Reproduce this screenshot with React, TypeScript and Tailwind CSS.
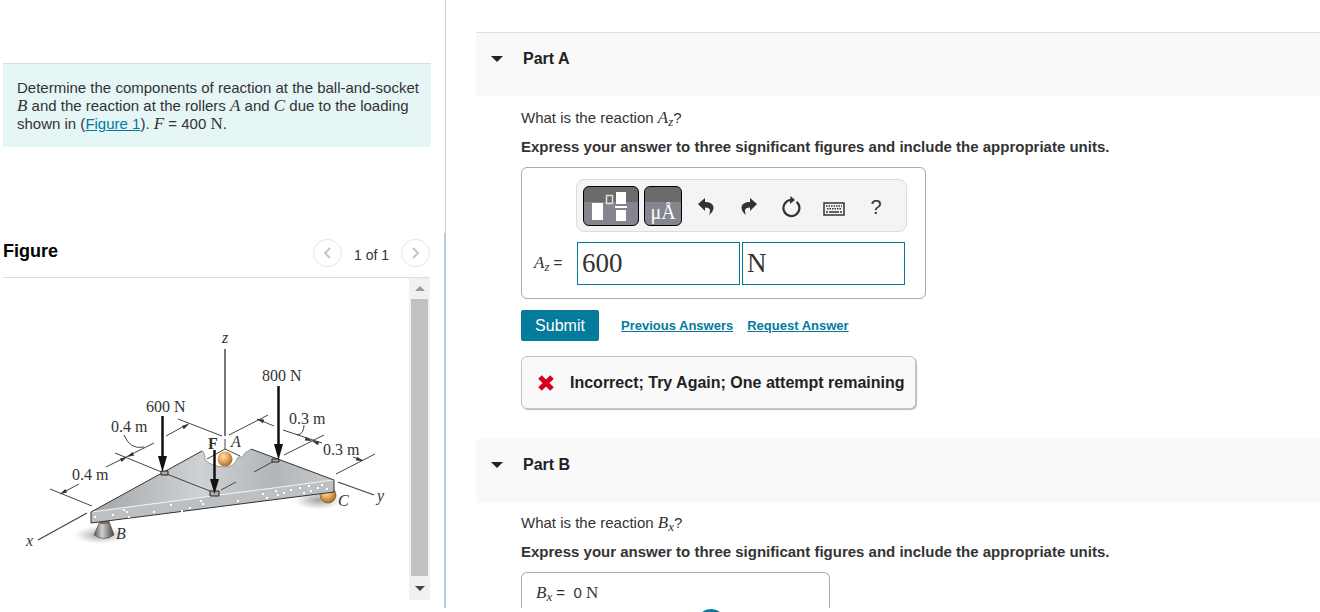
import type { ReactNode } from 'react';

const serif = 'font-["Liberation_Serif",serif]';

function Var({ children, sub }: { children: ReactNode; sub?: string }) {
  return (
    <span className='font-["Liberation_Serif",serif] text-[17px] leading-[0] italic'>
      {children}
      {sub && <sub className="bottom-[-3px] text-[13px]">{sub}</sub>}
    </span>
  );
}

function Caret() {
  return (
    <svg viewBox="0 0 12 6" className="h-1.5 w-3" fill="#222">
      <path d="M0 0h12L6 6z" />
    </svg>
  );
}

// light flecks on the front edge of the plate
const specks = [
  [94, 516], [112, 514], [126, 511], [128, 516], [123, 509], [153, 511], [170, 504], [181, 510], [189, 507],
  [200, 500], [202, 503], [237, 500], [262, 493], [266, 497], [275, 490], [277, 494], [283, 492], [290, 489],
  [299, 487], [303, 492], [308, 485], [310, 490], [317, 487], [321, 484], [326, 488],
];

function Head({ x, y, angle }: { x: number; y: number; angle: number }) {
  return <path d="M0 0L-7 -2L-7 2z" fill="#333" stroke="none" transform={`translate(${x} ${y}) rotate(${angle})`} />;
}

function Diagram() {
  return (
    <svg
      viewBox="3 278 406 322"
      className='block w-full font-["Liberation_Serif",serif]'
      role="img"
      aria-label="Triangular plate supported at A, B and C"
    >
      <defs>
        <linearGradient id="plate" x1="0" y1="0" x2="1" y2="0">
          <stop offset="0" stopColor="#a2a6a9" />
          <stop offset=".45" stopColor="#cfd2d4" />
          <stop offset=".75" stopColor="#b3b6b9" />
          <stop offset="1" stopColor="#c6c8ca" />
        </linearGradient>
        <linearGradient id="cone">
          <stop offset="0" stopColor="#555" />
          <stop offset=".4" stopColor="#d0d0d0" />
          <stop offset="1" stopColor="#444" />
        </linearGradient>
        <radialGradient id="ball" cx=".4" cy=".35" r=".7">
          <stop offset="0" stopColor="#ffe3b0" />
          <stop offset=".5" stopColor="#e0a45a" />
          <stop offset="1" stopColor="#9b6526" />
        </radialGradient>
        <radialGradient id="shade">
          <stop offset="0" stopColor="#777" stopOpacity=".7" />
          <stop offset="1" stopColor="#999" stopOpacity="0" />
        </radialGradient>
      </defs>

      <ellipse cx="100" cy="535" rx="26" ry="9" fill="url(#shade)" />
      <ellipse cx="318" cy="500" rx="24" ry="10" fill="url(#shade)" />
      <path d="M100 521h9l5 14q-10 7-20 0z" fill="url(#cone)" stroke="#444" strokeWidth=".6" />
      <path d="M100 521h9v3h-9z" fill="#8a6b48" />
      <circle cx="328" cy="495" r="8" fill="url(#ball)" stroke="#6b4a1f" strokeWidth=".6" />

      <path
        d="M91 512L202 451Q205 452 205 460Q213 467 225 467Q235 467 238 457Q243 458 245 453L251 449L334 480L334 492L91 523z"
        fill="url(#plate)"
      />
      <path d="M91 512L334 480V492L91 523z" fill="#bcc0c3" />
      <path d="M91 512L334 480" stroke="#f4f4f4" />
      <path d="M202 451L91 512V523L334 492V480L251 449" fill="none" stroke="#333" />
      <path
        d="M202 451Q205 452 205 460Q213 467 225 467Q235 467 238 457Q243 458 245 453L251 449"
        fill="none"
        stroke="#888"
        strokeWidth=".8"
      />
      {specks.map(([x, y]) => (
        <rect key={`${x}-${y}`} x={x} y={y} width="2" height="2" fill="#fff" />
      ))}

      <g stroke="#444" strokeWidth="1" fill="none">
        <path d="M225 439V449L207 459M225 449L240 456" />
        <path d="M225 349V436" stroke="#777" strokeWidth="2" />
        <path d="M87 513L38 540M338 482L374 495" strokeWidth="1.300" />
        <path d="M178 419L222 436M166 436L188 424M115 453L164 473L210 491M50 489L92 506" />
        <path d="M154 443L106 467M79 484L60 494M124 435Q130 450 144 447" />
        <path d="M229 435L268 415M257 419L274 426M283 430L322 443M304 425Q304 434 297 435" />
        <path d="M284 455L324 435M254 472L276 460M353 457L362 460M336 474L375 454M221 490L236 482" />
      </g>
      <circle cx="225" cy="459" r="7.500" fill="url(#ball)" />
      <Head x={189} y={424} angle={-29} />
      <Head x={127} y={457} angle={-27} />
      <Head x={127} y={457} angle={153} />
      <Head x={60} y={494} angle={153} />
      <Head x={257} y={419} angle={200} />
      <Head x={312} y={441} angle={20} />
      <Head x={312} y={441} angle={200} />
      <Head x={363} y={461} angle={20} />

      <g fill="#aaa" stroke="#222">
        <path d="M161 471h7v4h-7zM210 491h9v5h-9zM272 459h7v3h-7z" />
      </g>
      <g stroke="#111" strokeWidth="2.500" fill="#111">
        <path d="M162.500 416V458M278.500 386V446M214.500 450V480" />
        <path d="M158 456h9l-4.500 16zM274 444h9l-4.500 16zM210 479h9l-4.500 15z" stroke="none" />
      </g>

      <g fill="#333" fontSize="16">
        <text x="146" y="412">600 N</text>
        <text x="262" y="381">800 N</text>
        <text x="111" y="432">0.4 m</text>
        <text x="72" y="480">0.4 m</text>
        <text x="289" y="424">0.3 m</text>
        <text x="323" y="455">0.3 m</text>
        <text x="208" y="449" fontWeight="bold">F</text>
        <g fontStyle="italic">
          <text x="222" y="343">z</text>
          <text x="26" y="546">x</text>
          <text x="377" y="501">y</text>
          <text x="231" y="447">A</text>
          <text x="116" y="539">B</text>
          <text x="338" y="506">C</text>
        </g>
      </g>
    </svg>
  );
}

const padBtn =
  'flex h-10 items-center justify-center rounded-md border border-black bg-linear-to-b from-[#6b6b6b] from-40% to-[#85858f] to-40%';
const toolBtn = 'flex h-8 w-6 items-center justify-center text-[#333]';

function Toolbar() {
  return (
    <div className="flex h-[53px] items-center rounded-lg border border-[#ddd] bg-[#f4f4f4] px-1.5">
      <button type="button" aria-label="Templates" className={`${padBtn} w-14`}>
        <svg viewBox="0 0 56 40" className="h-10 w-14 shrink-0" fill="#fff">
          <path d="M9 17h11v17H9zM33 6h10v12H33zM33 24h10v11H33zM32 20h12v2H32z" />
          <path d="M23.500 9.500h6v8h-6z" fill="none" stroke="#ddd" strokeWidth="1.500" />
        </svg>
      </button>
      <button type="button" className={`${padBtn} ${serif} ml-[5px] w-[38px] pt-3 text-[20px] text-white`}>
        μÅ
      </button>
      <div className="ml-3 flex flex-1 items-center justify-between pt-0.5 pr-3">
        <button type="button" aria-label="Undo" className={toolBtn}>
          <svg viewBox="0 0 16 18" className="h-[18px] w-4" fill="currentColor">
            <path d="M7 0L0 6L7 13V9.500Q12 9.500 12 12.500Q12 15 11 17Q15.500 13.500 15.500 9.500Q15 4 7 4z" />
          </svg>
        </button>
        <button type="button" aria-label="Redo" className={toolBtn}>
          <svg viewBox="0 0 16 18" className="h-[18px] w-4" fill="currentColor">
            <path d="M9 0L16 6L9 13V9.500Q4 9.500 4 12.500Q4 15 5 17Q.5 13.500 .5 9.500Q1 4 9 4z" />
          </svg>
        </button>
        <button type="button" aria-label="Reset" className={toolBtn}>
          <svg viewBox="0 0 20 22" className="h-[22px] w-5" fill="none" stroke="currentColor" strokeWidth="2.200">
            <path d="M15.500 5.800A8 8 0 1 1 10 4" />
            <path d="M9.500 0L14 4L9 8z" fill="currentColor" stroke="none" />
          </svg>
        </button>
        <button type="button" aria-label="Keyboard" className={toolBtn}>
          <svg viewBox="0 0 22 14" className="mt-1 h-3.5 w-[22px]" fill="none" stroke="currentColor">
            <path d="M1 1h20v12H1z" strokeWidth="1.500" />
            <path d="M3 4h16M4 6.800h14" strokeWidth="1.500" strokeDasharray="1.500 1" />
            <path d="M3 10h2M6 10h10M17 10h2" strokeWidth="1.500" />
          </svg>
        </button>
        <button type="button" aria-label="Help" className={`${toolBtn} text-xl`}>
          ?
        </button>
      </div>
    </div>
  );
}

function PartHeader({ title, className = '' }: { title: string; className?: string }) {
  return (
    <div className={`flex h-16 items-start bg-[#f9f9f9] pt-3.5 pl-[15px] ${className}`}>
      <button type="button" className="flex items-center gap-5 text-base leading-6 font-bold text-[#222]">
        <Caret />
        {title}
      </button>
    </div>
  );
}

const answerInput =
  'h-[43px] w-[163px] border border-[#047a9c] bg-white px-1 font-["Liberation_Serif",serif] text-[27px] text-[#333] outline-none';
const link = 'text-[13px] font-bold text-[#047a9c] underline';
const pagerBtn = 'flex h-7 w-[29px] items-center justify-center rounded-full border border-[#e5e5e5]';

export default function App() {
  return (
    <div className='flex h-screen overflow-hidden bg-white font-["Liberation_Sans",Arial,sans-serif] text-[15px] text-[#333]'>
      <aside className="mb-1 flex w-[446px] shrink-0 flex-col">
        <div className="h-[233px] border-r border-[#c5ccd3] pt-[63px] pl-[3px]">
          <div className="mr-3.5 border-t border-[#ddd] bg-[#e6f6f6] pt-[15px] pr-1.5 pb-3.5 pl-3.5">
            <p className="leading-[18px]">
              Determine the components of reaction at the ball-and-socket <Var>B</Var> and the reaction at the rollers{' '}
              <Var>A</Var> and <Var>C</Var> due to the loading shown in (
              <a href="#figure" className="text-[#047a9c] underline">
                Figure 1
              </a>
              ). <Var>F</Var> = 400 <span className={`${serif} text-[17px] leading-[0]`}>N</span>.
            </p>
          </div>
        </div>
        <section id="figure" className="flex min-h-0 flex-1 flex-col border-r-2 border-[#b8cce0] pr-3.5 pb-2 pl-[3px]">
          <header className="flex h-[45px] shrink-0 items-center justify-between border-b border-[#ddd] pb-1">
            <h2 className="pb-1 text-lg font-bold text-black">Figure</h2>
            <div className="flex items-center gap-3 text-sm">
              <button type="button" aria-label="Previous figure" className={pagerBtn}>
                <svg viewBox="0 0 8 12" className="h-3 w-2" fill="none" stroke="#c4c4c4" strokeWidth="2">
                  <path d="M7 1L2 6l5 5" />
                </svg>
              </button>
              <span className="pt-1">1 of 1</span>
              <button type="button" aria-label="Next figure" className={pagerBtn}>
                <svg viewBox="0 0 8 12" className="h-3 w-2" fill="none" stroke="#c4c4c4" strokeWidth="2">
                  <path d="M1 1l5 5l-5 5" />
                </svg>
              </button>
            </div>
          </header>
          <div className="flex min-h-0 flex-1">
            <div className="min-w-0 flex-1 overflow-hidden">
              <Diagram />
            </div>
            <div className="flex w-[21px] flex-col items-center bg-[#f1f1f1]">
              <svg viewBox="0 0 10 5" className="my-2 h-[5px] w-2.5" fill="#999">
                <path d="M0 5h10L5 0z" />
              </svg>
              <div className="w-[17px] flex-1 bg-[#c1c1c1]" />
              <svg viewBox="0 0 10 5" className="mt-2.5 mb-[9px] h-[5px] w-2.5" fill="#444">
                <path d="M0 0h10L5 5z" />
              </svg>
            </div>
          </div>
        </section>
      </aside>

      <main className="min-w-0 flex-1 pt-8 pl-[30px]">
        <PartHeader title="Part A" className="border-t border-[#ddd]" />
        <div className="pl-[45px]">
          <p className="pt-3 leading-5">
            What is the reaction <Var sub="z">A</Var>?
          </p>
          <p className="pt-[9px] leading-5 font-bold">
            Express your answer to three significant figures and include the appropriate units.
          </p>
          <div className="mt-2.5 w-[405px] rounded-md border border-[#aaa] pt-[11px] pr-[18px] pb-[13px] pl-[54px]">
            <Toolbar />
            <div className="mt-2.5 -ml-[42px] flex items-center">
              <label htmlFor="az" className="w-[43px]">
                <Var sub="z">A</Var> =
              </label>
              <input id="az" defaultValue="600" className={answerInput} />
              <input aria-label="Units" defaultValue="N" className={`${answerInput} ml-0.5`} />
            </div>
          </div>
          <div className="mt-[11px] flex items-center">
            <button type="button" className="h-[31px] w-[78px] rounded-xs bg-[#047a9c] text-base text-white">
              Submit
            </button>
            <a href="#previous" className={`${link} ml-[22px]`}>
              Previous Answers
            </a>
            <a href="#request" className={`${link} ml-3.5`}>
              Request Answer
            </a>
          </div>
          <div className="mt-[15px] flex h-[53px] w-[395px] items-center rounded-md border border-[#c4c4c4] bg-[#f9f9f9] pl-4 text-base font-bold text-[#222] shadow-[1px_1px_1px_#bbb]">
            <svg viewBox="0 0 16 16" className="mr-4 h-4 w-4 shrink-0" stroke="#db0020" strokeWidth="5">
              <path d="M2 2l12 12M14 2L2 14" />
            </svg>
            Incorrect; Try Again; One attempt remaining
          </div>
        </div>

        <PartHeader title="Part B" className="mt-[30px]" />
        <div className="pl-[45px]">
          <p className="pt-2.5 leading-5">
            What is the reaction <Var sub="x">B</Var>?
          </p>
          <p className="pt-[9px] leading-5 font-bold">
            Express your answer to three significant figures and include the appropriate units.
          </p>
          <div className="mt-2.5 h-9 w-[309px] rounded-t-md border border-b-0 border-[#aaa] px-3.5 pt-2.5">
            <p className="leading-5">
              <Var sub="x">B</Var> =&nbsp; 0 <span className={`${serif} text-[17px] leading-[0]`}>N</span>
            </p>
          </div>
          <div className="mt-px ml-[175px] h-[30px] w-[30px] rounded-full bg-[#047a9c]" />
        </div>
      </main>
    </div>
  );
}
